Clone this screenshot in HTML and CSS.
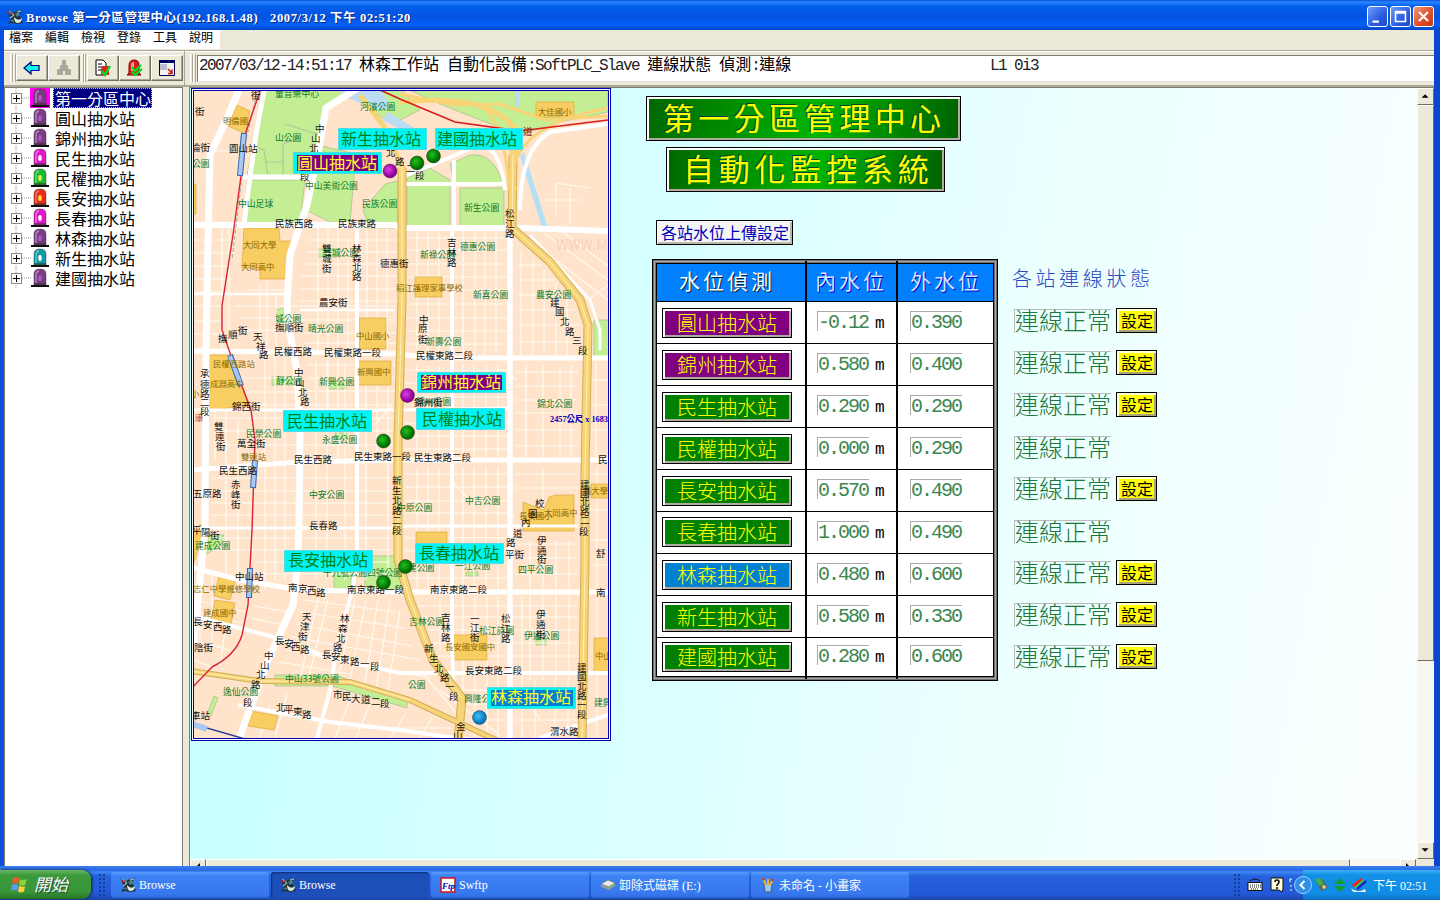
FILE: index.html
```html
<!DOCTYPE html>
<html lang="zh-Hant">
<head>
<meta charset="utf-8">
<title>Browse 第一分區管理中心</title>
<link rel="stylesheet" href="styles.css">
</head>
<body>
<svg class="defs" width="0" height="0">
  <defs>
    <symbol id="app" viewBox="0 0 16 16">
      <path d="M1 1l5 3 4-2 5-1-3 5 2 3 2 5-6 1-5-1-4 1 3-5-2-4z" fill="#25313a"/>
      <path d="M2 2l5 4M10 3l4-1M3 9l4-3" stroke="#8fb7a8" stroke-width="1.4"/>
      <path d="M1 3l5 1-3 2z" fill="#b22c3a"/>
      <path d="M7 8q4 5 8 1q0 5-5 5q-3-1-3-6z" fill="#d5ece4"/>
      <path d="M8 5l4-2 1 3-3 2zM3 12l3-2 1 3z" fill="#46858b"/>
    </symbol>
    <symbol id="lamp" viewBox="0 0 18 20">
      <path d="M3 17V6q0-5 6-5t6 5v11z" fill="currentColor" stroke="#333" stroke-opacity=".45"/>
      <path d="M5 15V6q1-3 3-3" fill="none" stroke="#fff" stroke-opacity=".4" stroke-width="1.4"/>
      <path d="M0 17h18v2H0z" fill="#111"/>
      <path d="M3 16h12" stroke="#333"/>
      <ellipse cx="9" cy="10" rx="1.8" ry="3"/>
    </symbol>
    <symbol id="plus" viewBox="0 0 32 20">
      <path d="M16 0v5M16 15v5M22 10h10" stroke="#999" stroke-dasharray="1 1"/>
      <rect x="11.500" y="5.500" width="10" height="10" fill="#fff" stroke="#8a8a8a"/>
      <path d="M13 10.500h7M16.500 7v7" stroke="#000"/>
    </symbol>
    <radialGradient id="gm" cx=".4" cy=".4"><stop offset="0" stop-color="#e040e8"/><stop offset="1" stop-color="#900098"/></radialGradient>
    <radialGradient id="gg" cx=".4" cy=".4"><stop offset="0" stop-color="#20c020"/><stop offset="1" stop-color="#007000"/></radialGradient>
    <radialGradient id="gb" cx=".4" cy=".4"><stop offset="0" stop-color="#40c0f8"/><stop offset="1" stop-color="#0878c0"/></radialGradient>
  </defs>
</svg>

<header class="titlebar">
  <svg width="16" height="16"><use href="#app"/></svg>
  <span class="caption">Browse 第一分區管理中心(192.168.1.48)</span>
  <span class="caption caption-time">2007/3/12 下午 02:51:20</span>
  <div class="winbtns">
    <svg class="wb" viewBox="0 0 21 21"><path d="M5 15h7v2.500H5z" fill="#fff"/></svg>
    <svg class="wb" viewBox="0 0 21 21"><path d="M5 5h11v11H5z M5 6.500h11" fill="none" stroke="#fff" stroke-width="1.800"/></svg>
    <svg class="wb wb-close" viewBox="0 0 21 21"><path d="M5.500 5.500l10 10m0-10l-10 10" stroke="#fff" stroke-width="2.400"/></svg>
  </div>
</header>

<div class="frame">
  <nav class="menu"><div class="menu-items"><span>檔案</span><span>編輯</span><span>檢視</span><span>登錄</span><span>工具</span><span>說明</span></div></nav>

  <div class="toolbar">
    <div class="tools">
      <i class="grip"></i>
      <div class="tool"><svg width="20" height="18" viewBox="0 0 20 18"><path d="M2 9l7-6v3.500h8v5H9V15z" fill="#1ee" stroke="#006" stroke-width="1.200"/><path d="M9 11.500h8" stroke="#00c"/></svg></div>
      <div class="tool"><svg width="20" height="18" viewBox="0 0 20 18"><path d="M8 1h4v5h2v4h3v6h-6v-4H9v4H3v-6h3V6h2z" fill="#aaa79b"/></svg></div>
      <i class="grip grip-s"></i>
      <div class="tool"><svg width="20" height="18" viewBox="0 0 20 18"><path d="M3 1h7l3 3v12H3z" fill="#fff" stroke="#000"/><path d="M5 5h4M5 8h5M5 11h4" stroke="#000"/><path d="M10 7h6v9H8v-6z" fill="#e02020"/><path d="M9 12l3 4 5-9" stroke="#0d2" stroke-width="2.400" fill="none"/></svg></div>
      <div class="tool"><svg width="20" height="18" viewBox="0 0 20 18"><path d="M4 14V7q0-6 5-6t5 5v8l2 2H2z" fill="#e21a1a" stroke="#700"/><path d="M6 6q0-3 3-3v9H6z" fill="#f99"/><path d="M7 8l3 4 6-6M7 13l3 3 7-6" stroke="#0d2" stroke-width="2.200" fill="none"/></svg></div>
      <div class="tool"><svg width="20" height="18" viewBox="0 0 20 18"><path d="M2.500 1.500h15v15h-15z" fill="#f4f2ec" stroke="#000050"/><path d="M2 1h16v3H2z" fill="#000060"/><path d="M3 5h7v6H3z" fill="#bcbcd0"/><path d="M11 10l4 4m0-3.500v4h-4" stroke="#d01010" stroke-width="1.500" fill="none"/></svg></div>
    </div>
    <div class="info">
      <i class="grip"></i>
      <div class="infobox">
        <span class="msg"><b>2007/03/12-14:51:17 </b>林森工作站<b> </b>自動化設備<b>:SoftPLC_Slave </b>連線狀態<b> </b>偵測<b>:</b>連線</span>
        <span class="msg"><b>L1 0i3</b></span>
      </div>
    </div>
  </div>

  <main class="work">
    <aside class="tree">
      <div class="node sel"><svg class="px"><use href="#plus"/></svg><svg class="lamp violet"><use href="#lamp"/></svg><span>第一分區中心</span></div>
      <div class="node"><svg class="px"><use href="#plus"/></svg><svg class="lamp violet"><use href="#lamp"/></svg><span>圓山抽水站</span></div>
      <div class="node"><svg class="px"><use href="#plus"/></svg><svg class="lamp violet"><use href="#lamp"/></svg><span>錦州抽水站</span></div>
      <div class="node"><svg class="px"><use href="#plus"/></svg><svg class="lamp pink"><use href="#lamp"/></svg><span>民生抽水站</span></div>
      <div class="node"><svg class="px"><use href="#plus"/></svg><svg class="lamp green"><use href="#lamp"/></svg><span>民權抽水站</span></div>
      <div class="node"><svg class="px"><use href="#plus"/></svg><svg class="lamp red"><use href="#lamp"/></svg><span>長安抽水站</span></div>
      <div class="node"><svg class="px"><use href="#plus"/></svg><svg class="lamp pink"><use href="#lamp"/></svg><span>長春抽水站</span></div>
      <div class="node"><svg class="px"><use href="#plus"/></svg><svg class="lamp violet"><use href="#lamp"/></svg><span>林森抽水站</span></div>
      <div class="node"><svg class="px"><use href="#plus"/></svg><svg class="lamp teal"><use href="#lamp"/></svg><span>新生抽水站</span></div>
      <div class="node"><svg class="px"><use href="#plus"/></svg><svg class="lamp violet"><use href="#lamp"/></svg><span>建國抽水站</span></div>
    </aside>

    <section class="pane">
      <div class="canvas">
        <svg class="map" viewBox="194 91 414 647" preserveAspectRatio="none">
          <rect x="190" y="88" width="422" height="654" fill="#ffe4cb"/>
          <!-- parks -->
          <g fill="#c4ee94" stroke="#aab98c" stroke-width=".7">
            <path d="M262 88H360L330 106 320 130 310 176H247L255 130z"/>
            <path d="M247 180H305L300 223H243z"/>
            <path d="M322 146L356 154 350 223 330 222 306 210z"/>
            <path d="M398 181V228H366V218L363 210 385 184z"/>
            <path d="M405 88H608V112L560 122 520 135 480 120 440 104z"/>
            <path d="M340 88H400L420 110 392 124 368 108z"/>
            <path d="M407 178L430 168 450 180 450 226H407z"/>
            <path d="M460 188H504V226H460z"/>
            <path d="M450 164L470 155Q495 152 503 186L455 184z"/>
            <path d="M594 320h16v38h-16z"/>
            <path d="M334 556h17v33h-17zM365 556h36v34h-36z"/>
            <path d="M202 557l6-22h16l-3 10z"/>
            <path d="M275 675h60l72 26v7l-75-22h-57z"/>
            <path d="M318 249h22v8h-22zM276 310l8-2 3 14h-10zM272 377h25v8h-25zM328 381h18v8h-18zM335 433h12v6h-12zM207 714l7-18 4 2-7 18z"/>
            <path d="M536 638h10v7h-10zM466 572h12v4h-12z"/>
          </g>
          <path d="M285 124L320 135M258 148L264 150 268 176M265 162H283M283 144V178M283 144L300 138" fill="none" stroke="#b4c4a0" stroke-width="1.200"/>
          <!-- water -->
          <path d="M335 88H380L392 108 380 110 350 99zM388 112l30 18-8 4-28-14z" fill="#bcdcf4"/>
          <path d="M524 152l24 76h-6l-22-72z" fill="#b4e0f6"/>
          <path d="M517 88v18" stroke="#bcdcf4" stroke-width="4"/>
          <!-- lanes -->
          <g fill="none" stroke="#fffaf2" stroke-width="1.200">
            <path d="M193 151H235M193 240H235M193 253H235M193 266H232M193 279H232M193 292H229M193 306H225M193 321H220M193 334H222"/>
            <path d="M222 226V350M229 226V350M260 285V350M267 280V345M276 293V350M248 290H288M235 306H395M240 318H290M243 330H292"/>
            <path d="M308 240H398M306 252H398M303 264H398M301 276H398M298 289H398M298 301H398M300 320H396M303 333H396M304 343H396"/>
            <path d="M318 226V352M328 226V410M338 226V460M348 240V352M367 226V352M377 226V460M387 226V352"/>
            <path d="M405 238H508M405 250H508M405 264H508M405 277H508M405 290H508M405 304H508M405 318H508M405 331H508M405 344H508"/>
            <path d="M417 230V355M428 230V355M439 230V355M463 230V355M475 230V355M485 230V355M496 230V355"/>
            <path d="M521 250V355M533 258V355M544 270V355M556 282V355M567 295V355M518 265H543M518 280H555M518 295H568M518 310H577M518 325H580M518 342H580"/>
            <path d="M530 240L608 300M545 234L608 280M560 230L608 266M588 300L608 285M588 320H594M556 183L590 188M556 184V215M540 200H580M570 188V225"/>
            <path d="M212 366H248M212 378H295M215 392H295M215 405H395M215 418H395M215 431H395M215 445H395M308 365H396M308 378H396M308 391H396"/>
            <path d="M215 365V460M226 410V590M238 420V590M265 355V590M275 355V580M285 355V580M316 362V580M327 362V580M345 362V580M366 362V580M388 362V580"/>
            <path d="M405 370H508M405 383H508M405 397H508M405 410H508M405 423H508M405 436H508M405 449H508M417 365V460M428 365V460M439 365V460M463 365V460M474 365V460M486 365V460M498 365V460"/>
            <path d="M516 372H578M516 386H578M516 400H578M516 413H578M516 430H578M516 446H578M526 365V460M543 365V460M560 365V460M571 365V460M590 380H608M590 405H608M590 430H608M596 362V460"/>
            <path d="M212 478H390M212 491H390M212 503H390M212 515H390M212 538H390M212 550H390M256 562H390M256 574H390"/>
            <path d="M405 474H508M405 487H508M405 501H508M405 513H508M405 538H508M405 551H508M405 563H508M405 578H508M417 467V590M428 467V590M439 467V590M463 467V590M474 467V590M486 467V590M498 467V590"/>
            <path d="M516 474H578M516 488H578M516 544H578M516 558H578M516 574H578M530 540V680M543 467V680M556 540V680M569 540V680M590 474H608M590 510H608M590 540H608M590 565H608M597 467V738"/>
            <path d="M254 606L290 612M251 618L288 626M305 600L395 612M300 612L405 628M296 624L412 646M292 637L420 660M286 650L430 678M280 662L350 674"/>
            <path d="M318 598L300 680M328 600L308 680M355 600L340 670M366 600L350 680M378 600L364 690M390 600L376 690M400 610L388 690"/>
            <path d="M418 606H578M422 617H578M428 630H578M434 643H578M438 656H578M460 690H508M460 704H508M470 720H508M516 690H578M516 704H578M516 720H578"/>
            <path d="M440 596V650M452 596V660M463 596V738M475 596V738M487 596V738M498 596V738M522 596V738M535 680V738M555 680V738M568 680V738"/>
            <path d="M195 600L245 612M195 612L243 623M193 640L230 650M193 660L215 668M200 575V640M212 575V650M225 630L220 665M270 705L260 738M287 694L275 738M350 700L335 738M370 704L356 738M340 728H450M405 715L390 738M432 718L420 738"/>
            <path d="M450 480L470 500M505 370L516 380M375 425L392 405M440 690L500 735M420 670L475 735M520 690L540 720"/>
          </g>
          <!-- schools -->
          <g fill="#f8cd62" stroke="#dda93e" stroke-width=".7">
            <path d="M237 105l13 6-4 23-18-8z"/><path d="M244 228h35l1 13h12l-6 38h-26v-11h-18z"/>
            <path d="M536 102h38v15h-38zM415 277h27v20h-27zM359 318h27v31h-27zM357 361h34v24h-34z"/>
            <path d="M208 355h22l18 50-40 6zM416 532h31v16h-31zM453 635h34v25h-34zM523 502l10 4 11 4 5-13 7-2h18v36h-51z"/>
            <path d="M591 484h19v14h-19zM594 638h16v36h-16zM219 576l17 4-6 20-16-4zM215 600l20 3-4 22-20-5zM252 711l26 5-4 14-26-4z"/>
            <path d="M190 184h6v30h-6zM190 530l12-6-2 20-6 18h-4z"/>
          </g>
          <!-- streets -->
          <g fill="none" stroke="#fff" stroke-width="5">
            <path d="M240 88L227 118 210 155 208 240 206 350 205 530 196 620 193 650" stroke-width="7"/>
            <path d="M358 88L326 108 319 148 307 205 290 255 287 305 289 328 297 372 300 430 299 522 298 560 293 605 267 662 238 742" stroke-width="7"/>
            <path d="M190 225H395L400 228H520L608 231" stroke-width="6"/><path d="M240 177H313M265 88Q255 130 244 225"/>
            <path d="M190 351L300 352 395 354 440 358H608M190 470L300 462 400 460H608M190 567L240 580 300 590 400 592H608"/>
            <path d="M190 528H395L405 526H578" stroke-width="3"/><path d="M193 410H400L508 408" stroke-width="3"/>
            <path d="M357 226V560L352 592 338 640 330 690 316 742M452 226V640L454 700" stroke-width="4"/>
            <path d="M510 228V742" stroke-width="5.500"/>
            <path d="M190 615L270 636 330 658 400 673H608" stroke-width="4"/>
            <path d="M405 184H505M454 160V226M405 176L480 145Q500 146 505 190M520 210Q520 150 550 132L608 124M238 705L330 722 400 730 470 740M608 715L540 738" stroke-width="4"/>
            <path d="M190 294H287M300 310H395" stroke-width="2.500"/>
            <path d="M530 235L590 300 600 330V350" stroke-width="3"/>
          </g>
          <!-- elevated roads -->
          <g fill="none" stroke="#cfae5a" stroke-width="9">
            <path d="M402 168V300L398 440V560L410 600 433 660 462 698 458 742"/>
            <path d="M513 155L512 228 550 262 580 300 588 325 585 472 585 560 582 742"/>
            <path d="M190 671L260 681 350 682 410 700 470 728 500 742" stroke-width="6"/>
          </g>
          <g fill="none" stroke="#f9d476" stroke-width="7">
            <path d="M402 165V300L398 440V560L410 600 433 660 462 698 458 742"/>
            <path d="M513 150L512 228 550 262 580 300 588 325 585 472 585 560 582 742"/>
            <path d="M360 95L385 128 402 168M400 102Q470 95 500 115T513 155" stroke-width="5"/>
          </g>
          <g fill="none" stroke="#f9d476" stroke-width="4">
            <path d="M190 671L260 681 350 682 410 700 470 728 500 742"/>
            <path d="M400 94L455 105 500 104 545 120 608 116M480 105Q505 120 509 190M608 108Q545 120 525 145T516 190" stroke-width="3"/>
          </g>
          <path d="M402 165V300L398 440V560L410 600 433 660 462 698M513 155L512 228 550 262 580 300 588 325 585 472 585 560 582 742M190 671L260 681 350 682 410 700" fill="none" stroke="#fff0b8"/>
          <!-- rail -->
          <g fill="none">
            <path d="M258 88L246 140 241 185 232 260" stroke="#aaa" stroke-dasharray="4 2"/>
            <path d="M261 88L245 135 241 176 233 235 222 306 222 330 236 370 251 410 255 440 252 530 248 605 242 635Q236 655 212 667L190 690" stroke="#d82334" stroke-width="1.400"/>
            <path d="M380 90L400 99 455 122 520 131 608 120" stroke="#d81c1c" stroke-width="1.600"/>
            <path d="M240 176l4-43M230 355l11 31M255 460l-2 28M250 568l-1 30" stroke="#3b63b0" stroke-width="6"/>
            <path d="M240 175l4-41M230 356l11 29M255 461l-2 26M250 569l-1 28" stroke="#a8c8f4" stroke-width="4"/>
            <path d="M190 723L245 739" stroke="#2c3d9a" stroke-width="1.500"/><path d="M192 724l15 5" stroke="#a8c8f4" stroke-width="6"/>
          </g>
          <text class="wm" x="556" y="250">WWW.M</text>
          <g class="g">
            <text x="275" y="97">童音樂中心</text><text x="275" y="141">山公園</text><text x="360" y="110">河濱公園</text><text x="192" y="167">公園</text>
            <text x="305" y="189">中山美術公園</text><text x="238" y="207">中山足球</text><text x="362" y="207">民族公園</text><text x="323" y="256">雙城公園</text>
            <text x="464" y="211">新生公園</text><text x="460" y="250">德惠公園</text><text x="420" y="258">新祿公園</text><text x="473" y="298">新喜公園</text><text x="536" y="298">農安公園</text>
            <text x="275" y="322">城公園</text><text x="308" y="332">晴光公園</text><text x="276" y="384">靜公園</text><text x="319" y="385">新興公園</text><text x="246" y="437">民榮公園</text>
            <text x="322" y="443">永盛公園</text><text x="309" y="498">中安公園</text><text x="426" y="345">新壽公園</text><text x="537" y="407">錦北公園</text><text x="416" y="405">錦州公園</text>
            <text x="465" y="504">中吉公園</text><text x="397" y="511">中原公園</text><text x="195" y="549">建成公園</text><text x="323" y="576">十九號公園四號公園</text><text x="223" y="695">逸仙公園</text>
            <text x="285" y="682">中山33號公園</text><text x="518" y="573">四平公園</text><text x="408" y="571">建公園</text><text x="455" y="569">一江公園</text><text x="409" y="625">吉林公園</text>
            <text x="479" y="634">松江詩園</text><text x="524" y="639">伊通公園</text><text x="408" y="688">公園</text><text x="464" y="702">興隆公園</text><text x="594" y="706">建興</text>
          </g>
          <g class="b">
            <text x="223" y="124">明倫國</text><text x="538" y="115">大佳國小</text><text x="243" y="248">大同大學</text><text x="241" y="270">大同高中</text><text x="396" y="291">稻江護理家事學校</text>
            <text x="356" y="339">中山國小</text><text x="357" y="375">新興國中</text><text x="213" y="367">民權西路站</text><text x="210" y="387">成淵高中</text><text x="241" y="460">雙連站</text>
            <text x="519" y="519">長安國小</text><text x="544" y="516">大同高中</text><text x="583" y="494">臺大學</text><text x="193" y="592">志仁中學進修學校</text><text x="203" y="616">建成國中</text>
            <text x="445" y="650">長安國安國中</text><text x="595" y="659">中山</text><text x="191" y="397">小</text><text x="195" y="421" fill="#c05030">康</text>
          </g>
          <g class="k">
            <text x="251" y="99">街</text><text x="195" y="115">街</text><text x="191" y="151">倫街</text><text x="229" y="152">圓山站</text>
            <text x="315 311 309 300" y="132 142 152 180">中山北段</text><text x="386 395 406 415" y="156 165 172 179">北路二段</text><text x="523" y="135" fill="#802020">道</text>
            <text x="275" y="227">民族西路</text><text x="338" y="227">民族東路</text><text x="322 322 322" y="252 262 272">雙城街</text><text x="352 352 352 352" y="252 262 271 280">林森北路</text>
            <text x="380" y="267">德惠街</text><text x="319" y="306">農安街</text><text x="505 505 505" y="217 227 237">松江路</text><text x="447 447 447" y="246 256 266">吉林路</text>
            <text x="550 555 560 565 572 578" y="306 315 325 335 344 354">建國北路三段</text><text x="275" y="331">撫順街</text><text x="218 228 238" y="342 338 334">撫順街</text>
            <text x="253 256 259" y="340 350 358">天祥路</text><text x="274" y="355">民權西路</text><text x="324" y="356">民權東路一段</text><text x="200 200 200 200 200" y="377 388 397 406 415">承德路二段</text>
            <text x="294 295 298 300" y="376 386 396 405">中山北路</text><text x="232" y="410">錦西街</text><text x="214 215 216" y="430 440 450">雙連街</text><text x="237" y="447">萬全街</text>
            <text x="219" y="474">民生西路</text><text x="294" y="463">民生西路</text><text x="354" y="460">民生東路一段</text><text x="231 231 231" y="488 498 508">赤峰街</text><text x="193" y="497">五原路</text>
            <text x="392 392 392 392 392 392" y="484 494 504 514 524 534">新生北路二段</text><text x="309" y="529">長春路</text><text x="419 418 418" y="323 332 343">中原街</text><text x="416" y="359">民權東路二段</text>
            <text x="414" y="406">錦州街</text><text x="414" y="461">民生東路二段</text><text x="598" y="463">民</text><text x="535 528 521 513 506" y="507 517 526 537 546">校園內道路</text><text x="580 580 580 580 580 579" y="488 497 506 515 524 535">建國北路二段</text>
            <text x="192 201 210" y="534 536 539">平陽街</text><text x="235" y="580">中山站</text><text x="193 203 213 222" y="625 628 630 633">長安西路</text><text x="288 298 307 316" y="591 592 594 596">南京西路</text>
            <text x="347" y="593">南京東路一段</text><text x="302 300 298" y="620 630 640">天津街</text><text x="340 338 336 333" y="622 632 642 651">林森北路</text><text x="275 284 291 300" y="644 647 650 653">長安西路</text>
            <text x="322 331 340 350 360 370" y="658 660 663 665 667 670">長安東路一段</text><text x="264 260 256 251 243" y="659 669 678 688 706">中山北路段</text><text x="333 342 351 361 371 380" y="698 700 702 703 705 707">市民大道二段</text>
            <text x="276 284 293 302" y="711 713 715 718">北平東路</text><text x="194" y="651">陰街</text><text x="191" y="719">車站</text><text x="537 537 537" y="544 554 563">伊通街</text><text x="505" y="558">平街</text>
            <text x="430" y="593">南京東路二段</text><text x="596" y="557">舒</text><text x="596" y="596">南</text><text x="441 441 441" y="621 631 641">吉林路</text><text x="470 470 470" y="622 631 641">一江街</text>
            <text x="501 501 501" y="622 632 642">松江路</text><text x="536 536 536" y="618 628 638">伊通街</text><text x="424 429 434 440 445 449" y="652 662 672 681 690 700">新生北路一段</text><text x="465" y="674">長安東路二段</text>
            <text x="577 577 577 577 577 577" y="671 680 690 699 708 718">建國北路一段</text><text x="550" y="735">渭水路</text><text x="456 453" y="730 739">金山</text>
          </g>
          <text class="dim" x="550" y="422" textLength="58" lengthAdjust="spacingAndGlyphs">2457公尺 x 1683</text>
          <g stroke="#00000055">
            <circle cx="390" cy="171" r="7" fill="url(#gm)"/><circle cx="417" cy="163" r="7" fill="url(#gg)"/><circle cx="433.500" cy="156" r="7" fill="url(#gg)"/>
            <circle cx="407.500" cy="395.500" r="7" fill="url(#gm)"/><circle cx="407.500" cy="432.500" r="7" fill="url(#gg)"/><circle cx="383.500" cy="441" r="7" fill="url(#gg)"/>
            <circle cx="383.500" cy="582.500" r="7" fill="url(#gg)"/><circle cx="405.500" cy="566.500" r="7" fill="url(#gg)"/><circle cx="479.500" cy="717.500" r="7" fill="url(#gb)"/>
          </g>
          <g fill="#00f4f4" stroke="#58d8e0">
            <path d="M338.500 128.500h88v21h-88zM435.500 128.500h87v21h-87zM293.500 152.500h88v21h-88zM417.500 372.500h88v20h-88zM416.500 408.500h88v21h-88zM283.500 410.500h88v21h-88zM284.500 550.500h88v21h-88zM415.500 543.500h88v20h-88zM487.500 687.500h88v21h-88z"/>
          </g>
          <path d="M297 155h81v16h-81zM421 375h81v15h-81z" fill="#800080"/><path d="M491 690h82v16h-82z" fill="#0080d0"/>
          <g class="st">
            <text x="341" y="145">新生抽水站</text><text x="437" y="145">建國抽水站</text><text x="422" y="425">民權抽水站</text><text x="287" y="427">民生抽水站</text><text x="288" y="566">長安抽水站</text><text x="419" y="559">長春抽水站</text>
            <g fill="#ffff30"><text x="297" y="169">圓山抽水站</text><text x="421" y="388">錦州抽水站</text><text x="491" y="703">林森抽水站</text></g>
          </g>
        </svg>

        <div class="panel">
          <h1 class="sign">第一分區管理中心</h1>
          <h1 class="sign sign-2">自動化監控系統</h1>
          <div class="upload">各站水位上傳設定</div>
          <div class="split">
            <div class="levels">
              <i class="vline v1"></i><i class="vline v2"></i>
              <div class="row head"><span>水位偵測</span><span class="lav">內水位</span><span class="lav">外水位</span></div>
              <div class="row"><div><b class="station purple">圓山抽水站</b></div><div><b class="val">-0.12</b><b class="m">m</b></div><div><b class="val">0.390</b></div></div>
              <div class="row"><div><b class="station purple">錦州抽水站</b></div><div><b class="val">0.580</b><b class="m">m</b></div><div><b class="val">0.400</b></div></div>
              <div class="row"><div><b class="station">民生抽水站</b></div><div><b class="val">0.290</b><b class="m">m</b></div><div><b class="val">0.290</b></div></div>
              <div class="row"><div><b class="station">民權抽水站</b></div><div><b class="val">0.000</b><b class="m">m</b></div><div><b class="val">0.290</b></div></div>
              <div class="row"><div><b class="station">長安抽水站</b></div><div><b class="val">0.570</b><b class="m">m</b></div><div><b class="val">0.490</b></div></div>
              <div class="row up"><div><b class="station">長春抽水站</b></div><div><b class="val">1.000</b><b class="m">m</b></div><div><b class="val">0.490</b></div></div>
              <div class="row"><div><b class="station blue">林森抽水站</b></div><div><b class="val">0.480</b><b class="m">m</b></div><div><b class="val">0.600</b></div></div>
              <div class="row"><div><b class="station">新生抽水站</b></div><div><b class="val">0.580</b><b class="m">m</b></div><div><b class="val">0.330</b></div></div>
              <div class="row last"><div><b class="station">建國抽水站</b></div><div><b class="val">0.280</b><b class="m">m</b></div><div><b class="val">0.600</b></div></div>
            </div>
            <div class="links">
              <h2>各站連線狀態</h2>
              <div class="link"><span>連線正常</span><b>設定</b></div>
              <div class="link"><span>連線正常</span><b>設定</b></div>
              <div class="link"><span>連線正常</span><b>設定</b></div>
              <div class="link low"><span>連線正常</span></div>
              <div class="link"><span>連線正常</span><b>設定</b></div>
              <div class="link low"><span>連線正常</span></div>
              <div class="link"><span>連線正常</span><b>設定</b></div>
              <div class="link"><span>連線正常</span><b>設定</b></div>
              <div class="link"><span>連線正常</span><b>設定</b></div>
            </div>
          </div>
        </div>

        <div class="vscroll">
          <svg class="sbtn" viewBox="0 0 17 17"><path d="M8 6l4 4H4z"/></svg>
          <div class="thumb"></div><div class="track"></div>
          <svg class="sbtn" viewBox="0 0 17 17"><path d="M4 6h8l-4 4z"/></svg>
        </div>
      </div>
      <div class="hscroll"><i class="hb"><svg width="14" height="7"><path d="M5 7l4-4v4z"/></svg></i><i class="hthumb"></i><i class="htrack"></i><i class="hb"><svg width="14" height="7"><path d="M5 3l4 4h-4z"/></svg></i></div>
    </section>
  </main>
</div>

<footer class="taskbar">
  <div class="start">
    <svg width="20" height="19" viewBox="0 0 20 19"><path d="M3 3q4-2 6 0l-1 6q-3-2-6 0z" fill="#f0592b"/><path d="M10 4q3 2 7 0l-2 6q-3 2-6-1z" fill="#8fd03c"/><path d="M2 10q3-2 6 0l-1 6q-3-2-6 0z" fill="#5a9cf4"/><path d="M9 10.500q3 2 6 1l-1 5q-3 2-6 0z" fill="#fbd13c"/></svg>
    <span>開始</span>
  </div>
  <i class="dots"></i>
  <div class="tasks">
    <div class="task"><svg width="16" height="16"><use href="#app"/></svg>Browse</div>
    <div class="task on"><svg width="16" height="16"><use href="#app"/></svg>Browse</div>
    <div class="task"><svg width="16" height="16"><rect x="1" y="1" width="14" height="14" fill="#fff" stroke="#d01818" stroke-width="1.500"/><text class="ftp" x="2" y="12">Ftp</text></svg>Swftp</div>
    <div class="task"><svg width="16" height="16"><path d="M1 7l7-4 7 3-6 4z" fill="#e8e8e8" stroke="#666" stroke-width=".6"/><path d="M1 7v3l8 3 6-4V6l-6 4z" fill="#999"/><path d="M10 10l3-2" stroke="#3d3"/></svg>卸除式磁碟 (E:)</div>
    <div class="task"><svg width="16" height="16"><path d="M4 7h8l-1 8H5z" fill="#9fc6e8" stroke="#345" stroke-width=".7"/><path d="M6 8L3 1M8 8V2M10 8l3-6" stroke="#e6b63a" stroke-width="2"/><path d="M3 1l1 2M13 2l-1 2" stroke="#c22" stroke-width="2"/></svg>未命名 - 小畫家</div>
  </div>
  <div class="lang">
    <i class="dots"></i>
    <svg width="16" height="16"><path d="M3 4q5-4 10 0" stroke="#111" fill="none"/><rect x="1" y="5.500" width="14" height="8" fill="#fff" stroke="#111"/><path d="M3 8h11M3 10h11M4 12h8" stroke="#111" stroke-dasharray="1 1"/></svg>
    <svg width="16" height="16"><path d="M2 1h12v11l-1 3-3-2H2z" fill="#fffbd8" stroke="#111"/><path d="M6 5q0-2 2-2t2 2q0 1-2 3v1M8 10v2" stroke="#111" stroke-width="1.600" fill="none"/></svg>
    <svg class="mini" width="5" height="14"><path d="M1 4V1h2M1 8h2M1 12h2" stroke="#fff" fill="none"/></svg>
  </div>
  <div class="tray">
    <svg class="arrow" width="18" height="18"><circle cx="9" cy="9" r="8.500" fill="#2f8ee8" stroke="#9fd0ff"/><path d="M10.500 5l-4 4 4 4" stroke="#fff" stroke-width="2" fill="none"/></svg>
    <svg width="16" height="16"><path d="M2 5l7-3 5 9-7 3z" fill="#59676c"/><path d="M1 2l5-1 4 6-5 2z" fill="#39b54a"/><path d="M8 9l3-1 1 3-3 1z" fill="#e4d17c"/></svg>
    <svg width="16" height="16"><path d="M2 7l6-6 6 6zM2 9h12l-6 6z" fill="#149a34"/></svg>
    <svg width="18" height="16"><path d="M1 11q6 6 14 1l1 3H3z" fill="#eee"/><path d="M3 9l9-7" stroke="#e22" stroke-width="3"/><path d="M5 11l9-8" stroke="#2d4" stroke-width="2"/><path d="M7 12l9-8" stroke="#22c" stroke-width="2.500"/></svg>
    <span>下午 02:51</span>
  </div>
</footer>
</body>
</html>
```

FILE: styles.css
```css
* { box-sizing: border-box; }
body {
  margin: 0; width: 1440px; height: 900px; overflow: hidden;
  display: flex; flex-direction: column;
  font-family: "Liberation Serif", "Noto Sans CJK TC", sans-serif;
  background: #0a4fe0; color: #000;
}
b, i, h1, h2 { font-weight: normal; font-style: normal; margin: 0; }
.defs { position: absolute; }
svg { flex: none; }

.titlebar {
  height: 30px; flex: none; display: flex; align-items: center; padding: 3px 6px 0 7px;
  background: linear-gradient(#0a50d8 0, #2a86ff 2px, #0560ee 6px, #0353e0 16px, #0660f6 25px, #0446c4 30px);
  color: #fff;
}
.caption { font-size: 12.5px; font-weight: bold; margin-left: 3px; white-space: nowrap; letter-spacing: .54px; text-shadow: 1px 1px #0a2a80; }
.caption-time { margin-left: 12px; letter-spacing: .62px; }
.winbtns { margin-left: auto; display: flex; gap: 2px; }
.wb { width: 21px; height: 21px; border: 1px solid #fff; border-radius: 3px; background: linear-gradient(135deg, #6f9cf8, #2a5ce0 60%, #1d49c8); }
.wb-close { background: linear-gradient(135deg, #f09a7c, #e0512c 55%, #c03a14); }

.frame { flex: none; height: 836px; border: solid #0a4fe0; border-width: 0 6px 0 4px; border-right-color: #0a46d0; background: #ece9d8; display: flex; flex-direction: column; }
.menu { height: 20px; flex: none; }
.menu-items { width: 216px; height: 19px; background: #fff; display: flex; gap: 12px; padding-left: 5px; font-size: 12px; line-height: 17px; }
.toolbar { height: 37px; flex: none; display: flex; border-top: 1px solid #aca899; border-bottom: 2px solid #aca899; box-shadow: inset 0 1px #fff; }
.tools { width: 181px; display: flex; align-items: center; padding-left: 6px; border-right: 1px solid #aca899; }
.grip { width: 6px; height: 28px; border: solid #fff; border-width: 0 1px; border-right-color: #aca899; background: linear-gradient(90deg, #ece9d8 1px, #aca899 1px 2px, #fff 2px 3px, #ece9d8 3px); }
.grip-s { width: 5px; margin: 0 1px; }
.tool { width: 32px; height: 26px; display: flex; align-items: center; justify-content: center; border: 1px solid; border-color: #fff #716f64 #716f64 #fff; box-shadow: inset -1px -1px #aca899; }
.info { flex: 1; display: flex; align-items: center; padding-left: 5px; }
.infobox { flex: 1; height: 27px; margin-left: 1px; background: #fff; border: 1px solid #807d70; border-right: 0; border-bottom-color: #ddd; padding: 1px 0 0 1px; display: flex; font: 400 16px/19px "Liberation Mono", "Noto Sans CJK TC", monospace; }
.infobox b { letter-spacing: -1.6px; white-space: pre; color: #222; }
.infobox .msg:first-child { width: 791px; white-space: nowrap; }

.work { flex: 1; min-height: 0; display: flex; }
.tree { width: 179px; background: #fff; border: solid #807d70; border-width: 1px 1px 0 1px; }
.node { height: 20px; display: flex; align-items: center; font: 400 16px/20px "Noto Sans CJK TC", sans-serif; }
.node span { padding: 0 1px 0 2px; margin-left: 2px; line-height: 20px; height: 20px; white-space: nowrap; }
.sel span { background: #000080; color: #fff; outline: 1px dotted #cc8; outline-offset: -1px; }
.px { width: 32px; height: 20px; margin-left: -5px; }
.lamp { width: 20px; height: 20px; padding: 0 1px; margin-left: -2px; }
.node .lamp + span { margin-left: 3px; }
.sel .lamp { background: #f0e; }
.violet { color: #7c3a86; fill: #a55cc0; } .pink { color: #e414cc; fill: #fff; }
.green { color: #18bc28; fill: #d8f050; } .red { color: #ec2a18; fill: #ffe040; } .teal { color: #109ca4; fill: #fff; }

.pane { flex: 1; min-width: 0; margin-left: 6px; border-left: 1px solid #807d70; border-top: 1px solid #807d70; display: flex; flex-direction: column; }
.canvas { height: 771px; flex: none; padding-left: 1px; display: flex; align-items: flex-start; background: linear-gradient(100deg, #c4ffff, #d8ffff 38%, #ecffff 65%, #fcffff 100%); }
.map { width: 420px; height: 653px; border: 3px double #0000b0; background: #fff; font: 9.5px "Noto Sans CJK TC", sans-serif; }
.map .k { font-size: 9.5px; fill: #111; }
.map .g { font-size: 8.8px; fill: #0b7a2c; }
.map .b { font-size: 8.4px; fill: #8a6a00; }
.map .wm { font-size: 14px; fill: #f8d0bc; }
.map .dim { font: bold 9px "Liberation Serif", "Noto Sans CJK TC", serif; fill: #0000c0; }
.map .st { font-size: 16px; fill: #008018; font-weight: 400; }

.panel { margin-left: 41px; padding-top: 8px; flex: 1; }
.sign {
  width: 315px; height: 45px; margin-left: -6px; border: 1px solid #000;
  box-shadow: inset 2px 2px #fff, inset -2px -2px #b0ada0;
  background: linear-gradient(100deg, #006a00 2%, #00a800 45%, #00b400 55%, #006400 98%);
  font: 400 31px/39px "Noto Sans CJK TC", sans-serif; letter-spacing: 4.3px; padding-left: 16px; white-space: nowrap;
  color: #ff0; text-shadow: -1px -1px #043;
}
.sign-2 { width: 279px; margin: 6px 0 0 14px; letter-spacing: 4.8px; }
.upload { width: 137px; height: 25px; margin: 28px 0 0 4px; border: 1px solid #000; box-shadow: inset 1px 1px #fff, inset -2px -2px #bbb8ac; background: #f4f4f4; font: 400 16px/22px "Noto Sans CJK TC", sans-serif; padding-left: 4px; color: #0000b8; white-space: nowrap; }
.split { display: flex; margin-top: 14px; align-items: flex-start; }
.levels { position: relative; width: 346px; height: 422px; border: 1px solid #000; padding: 4px; background: #fff; box-shadow: inset 0 0 0 1px #707070, inset 0 0 0 2px #a8a8a8, inset 0 0 0 3px #707070, inset 0 0 0 4px #000; }
.vline { position: absolute; top: 1px; bottom: 1px; width: 2px; background: #000; }
.v1 { left: 152px; } .v2 { left: 243px; }
.row { height: 42px; display: grid; grid-template-columns: 150px 91px 95px; border-bottom: 1px solid #000; }
.row > div { display: flex; align-items: flex-start; padding: 9px 0 0 10px; }
.row > div:first-child { padding: 6px 0 0 5px; }
.row > div:last-child { padding-left: 12px; }
.up > div:first-child { padding-top: 5px; }
.last { height: 38px; border: 0; }
.last > div { padding-top: 7px; } .last > div:first-child { padding-top: 4px; }
.head { height: 38px; background: #0080ff; color: #fff; font: 400 21px/33px "Noto Sans CJK TC", sans-serif; letter-spacing: 3px; text-shadow: 1px 1px #024; }
.head span { padding-left: 22px; white-space: nowrap; }
.head .lav { padding-left: 8px; color: #d8e4ff; text-shadow: 1px 1px #00c; }
.head .lav:last-child { padding-left: 12px; }
.station { width: 130px; height: 30px; border: 1px solid #000; box-shadow: inset 2px 2px #fff, inset -2px -2px #b0ada0; background: #008000; color: #ff0; font: 300 20px/27px "Noto Sans CJK TC", sans-serif; text-align: center; }
.purple { background: #800080; } .blue { background: #0080d0; }
.val { width: 52px; height: 20px; border: solid #aaa; border-width: 1px 0 0 1px; font: 20px/21px "Liberation Mono", monospace; letter-spacing: -2px; color: #3c8650; }
.m { font: 16px/26px "Liberation Mono", monospace; margin-left: 6px; }
.links { margin-left: 14px; }
.links h2 { height: 43px; font: 300 20px/38px "Noto Sans CJK TC", sans-serif; letter-spacing: 3.6px; color: #2848c0; white-space: nowrap; }
.link { height: 42px; padding: 7px 0 0 2px; display: flex; align-items: flex-start; }
.low { padding-top: 8px; }
.link span { width: 97px; height: 24px; border: solid #bbb; border-width: 1px 0 0 1px; font: 300 24px/20px "Noto Sans CJK TC", sans-serif; color: #1c7838; white-space: nowrap; }
.link b { width: 41px; height: 25px; margin: -1px 0 0 5px; border: 1px solid #000; background: #ff0; box-shadow: inset 2px 2px #ffffd0, inset -2px -2px #a8a480; font: 400 16px/22px "Noto Sans CJK TC", sans-serif; padding-left: 4px; white-space: nowrap; }

.vscroll { width: 17px; height: 771px; display: flex; flex-direction: column; }
.sbtn, .thumb, .hb, .hthumb { background: #ece9d8; border: 1px solid; border-color: #fff #716f64 #716f64 #fff; }
.sbtn { width: 17px; height: 17px; }
.thumb { height: 556px; }
.track { flex: 1; background: #f8f7f2; }
.hscroll { flex: 1; display: flex; background: #ece9d8; overflow: hidden; }
.hb { width: 16px; display: flex; } .hthumb { width: 1144px; } .htrack { width: 50px; background: #f8f7f2; }
.hb, .hthumb { border-bottom: 0; }

.taskbar { height: 34px; flex: none; display: flex; padding-top: 4px; background: linear-gradient(#3a80f0 0, #2a6ae4 4px, #3f86f4 6px, #2562dc 10px, #2359d6 28px, #1b44a8 34px); color: #fff; font-size: 12px; }
.start { width: 91px; height: 29px; display: flex; align-items: center; gap: 4px; padding-left: 10px; border-radius: 0 9px 9px 0; background: linear-gradient(#6cb868, #3c9a3c 5px, #379637 22px, #287028); box-shadow: 1px 0 3px #123; font: italic 400 17px/26px "Noto Sans CJK TC", sans-serif; text-shadow: 1px 1px 1px #143; }
.start span { margin-top: -2px; }
.dots { width: 6px; height: 22px; margin: 4px 0 0 8px; background: radial-gradient(circle at 1px 1px, #153c96 1px, transparent 1.4px) 0 0 / 4px 4px; }
.tasks { display: flex; gap: 2px; margin-left: 6px; }
.task { width: 158px; height: 26px; margin-top: 2px; border-radius: 3px; padding-left: 9px; display: flex; align-items: center; gap: 3px; background: linear-gradient(#5b9cfb, #3c81f3 4px, #3778ee 22px, #2f68d8); white-space: nowrap; }
.on { background: #1c50b8; box-shadow: inset 1px 1px 2px #0c2c78; }
.ftp { font: bold italic 9px "Liberation Serif", serif; fill: #00c; }
.lang { margin-left: auto; display: flex; align-items: center; gap: 6px; }
.lang .dots { margin: 0 1px 0 0; }
.mini { margin: 0 9px 0 -2px; }
.tray { width: 137px; display: flex; align-items: center; gap: 2px; background: linear-gradient(#3cb0f6, #1290e8 5px, #108ce4 24px, #0c6cc0); white-space: nowrap; }
.tray span { margin-left: 3px; }
.arrow { margin-left: -9px; }
```
